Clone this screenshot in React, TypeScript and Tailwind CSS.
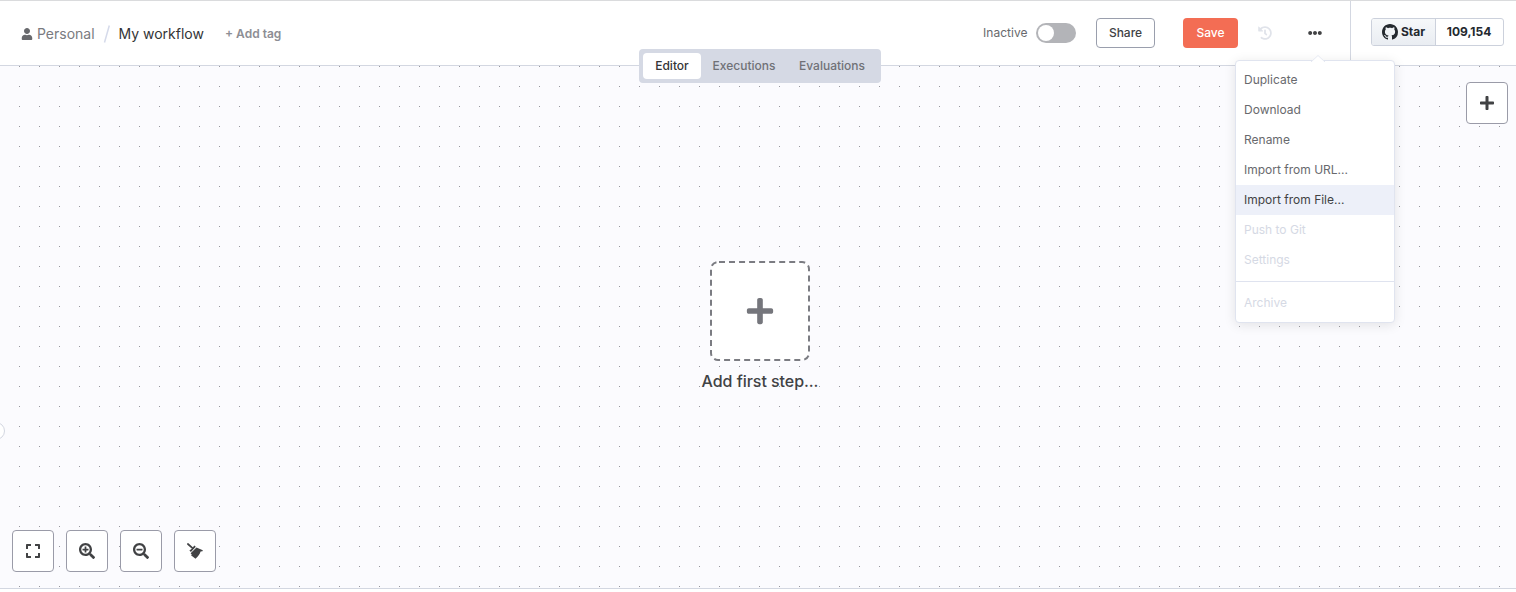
import type { ReactNode } from 'react';
import { FaUser, FaHistory, FaEllipsisH, FaPlus, FaExpand, FaSearchPlus, FaSearchMinus } from 'react-icons/fa';

const primaryActions = ['Duplicate', 'Download', 'Rename', 'Import from URL...', 'Import from File...', 'Push to Git', 'Settings'];

function actionColor(label: string) {
  if (label === 'Import from File...') return 'bg-[#edf0f9] text-[#414244]';
  if (label === 'Push to Git' || label === 'Settings') return 'text-[#d5d9e4]';
  return 'text-[#68696d]';
}

function GithubMark() {
  return (
    <svg viewBox="0 0 16 16" className="size-4 fill-[#24292f]">
      <path d="M8 0C3.58 0 0 3.58 0 8c0 3.54 2.29 6.53 5.47 7.59.4.07.55-.17.55-.38 0-.19-.01-.82-.01-1.49-2.01.37-2.53-.49-2.69-.94-.09-.23-.48-.94-.82-1.13-.28-.15-.68-.52-.01-.53.63-.01 1.08.58 1.23.82.72 1.21 1.87.87 2.33.66.07-.52.28-.87.51-1.07-1.78-.2-3.64-.89-3.64-3.95 0-.87.31-1.59.82-2.15-.08-.2-.36-1.02.08-2.12 0 0 .67-.21 2.2.82.64-.18 1.32-.27 2-.27s1.36.09 2 .27c1.53-1.04 2.2-.82 2.2-.82.44 1.1.16 1.92.08 2.12.51.56.82 1.27.82 2.15 0 3.07-1.87 3.75-3.65 3.95.29.25.54.73.54 1.48 0 1.07-.01 1.93-.01 2.2 0 .21.15.46.55.38A8.01 8.01 0 0 0 16 8c0-4.42-3.58-8-8-8z" />
    </svg>
  );
}

function BroomIcon() {
  return (
    <svg viewBox="0 0 16 16" className="size-4">
      <path d="M.9 1 5.5 5.2" stroke="#414244" strokeWidth="1.7" strokeLinecap="round" />
      <path d="M7.3 2.6 8.8 3.8 3.9 8.9 2.4 7.5 4.8 5.7z" fill="#414244" />
      <path d="m9.5 4.6 6.3 2.6-.3 1-1.9.3c-.8 2.5-2.5 5.1-5.1 7.2L4 12.3l.8-.7-1.2-1.3z" fill="#414244" />
    </svg>
  );
}

function CanvasButton({ children }: { children: ReactNode }) {
  return (
    <button className="flex size-[42px] items-center justify-center rounded-[4px] border border-[#9a9ba8] bg-white text-[#414244]">
      {children}
    </button>
  );
}

function ActionMenu() {
  return (
    <div className="absolute top-[60px] left-[1235px] z-20 w-40 rounded-[4px] border border-[#e0e4ef] bg-white pt-1 pb-1 text-[12px] shadow-[0_2px_12px_rgba(0,0,0,0.1)]">
      <svg viewBox="0 0 14 7" className="absolute -top-[6px] left-[75px] h-[7px] w-[14px]">
        <path d="M0 7 7 .5 14 7" fill="white" stroke="#e6e9f2" />
      </svg>
      {primaryActions.map((label) => (
        <div key={label} className={`flex h-[30px] items-center px-2 ${actionColor(label)}`}>{label}</div>
      ))}
      <div className="mt-[6px] border-t border-[#dfe3ef] pt-[6px]">
        <div className="flex h-[30px] items-center px-2 text-[#d5d9e4]">Archive</div>
      </div>
    </div>
  );
}

export default function App() {
  return (
    <div className="relative flex h-[592px] w-[1516px] flex-col overflow-hidden bg-white font-[Inter,sans-serif]">
      <header className="flex h-[66px] shrink-0 border-t border-b border-t-[#dadbdd] border-b-[#d3d7e1]">
        <div className="flex h-[66px] flex-1 items-center pb-px pl-[21px]">
          <FaUser className="mr-1 size-3 text-[#68696d]" />
          <span className="w-[58px] text-[14px] whitespace-nowrap text-[#7a7b80]">Personal</span>
          <svg viewBox="0 0 8 18" className="mr-[7.5px] ml-[8px] h-[18px] w-2"><path d="M1.5 17.5 6.3.5" stroke="#d5daea" strokeWidth="1.5" /></svg>
          <span className="w-[106.5px] text-[14px] whitespace-nowrap text-[#333436]">My workflow</span>
          <span className="text-[12px] font-semibold text-[#8d8e94]">+ Add tag</span>
        </div>
        <div className="flex h-16 items-center">
          <span className="mr-2 w-[45px] text-[12px] tracking-[0.05px] text-[#68696d]">Inactive</span>
          <span className="mr-5 flex h-5 w-10 items-center rounded-full bg-[#b3b4b8] px-[2px]"><span className="size-4 rounded-full bg-white" /></span>
          <button className="mr-7 h-[30px] w-[59px] rounded-[4px] border border-[#9a9fad] text-[12px] font-medium text-[#414244]">Share</button>
          <button className="h-[30px] w-[55px] rounded-[4px] bg-[#f36d54] text-[12px] font-medium text-white">Save</button>
          <FaHistory className="ml-5 size-[14px] text-[#e0e3ea]" />
          <FaEllipsisH className="mr-[28px] ml-9 size-[14px] text-[#414244]" />
        </div>
        <div className="flex w-[166px] items-start border-l border-[#d3d7e1] pt-[17px] pl-5">
          <div className="flex h-7 w-[133px] overflow-hidden rounded-[3px] border border-[#ccd1dc] text-[12px] font-bold text-[#24292f]">
            <div className="flex w-[63px] items-center gap-[3px] bg-gradient-to-b from-[#f6f8fa] to-[#e9edf2] pl-[10px]"><GithubMark />Star</div>
            <div className="flex flex-1 items-center justify-center border-l border-[#ccd1dc] pr-px">109,154</div>
          </div>
        </div>
      </header>

      <main className="relative flex h-[523px] shrink-0 flex-col justify-between border-b border-[#d3d7e1] bg-[#fbfbfe]">
        <svg className="absolute inset-0 h-full w-full">
          <defs>
            <pattern id="dots" width="20" height="20" patternUnits="userSpaceOnUse"><rect x="19" y="0" width="1" height="1" fill="#97989e" /></pattern>
          </defs>
          <rect width="100%" height="100%" fill="url(#dots)" />
        </svg>
        <div className="absolute top-[356px] -left-[13px] size-[18px] rounded-full border border-[#d3d7e1] bg-white" />
        <div className="absolute top-[195px] left-[660px] flex w-[200px] flex-col items-center">
          <div className="flex size-[100px] items-center justify-center">
            <svg viewBox="0 0 100 100" className="absolute top-0 left-[50px] size-[100px]">
              <rect x="1" y="1" width="98" height="98" rx="7" fill="white" stroke="#7b7c82" strokeWidth="2" strokeDasharray="6 4.03" strokeDashoffset="-1" />
            </svg>
            <FaPlus className="relative size-[30px] text-[#75767c]" />
          </div>
          <span className="relative mt-2 text-[16px] leading-6 font-medium tracking-[-0.05px] whitespace-nowrap text-[#414244]">Add first step...</span>
        </div>
        <div className="relative flex justify-end pt-4 pr-2"><CanvasButton><FaPlus className="size-4" /></CanvasButton></div>
        <div className="relative flex gap-3 pb-4 pl-3">
          <CanvasButton><FaExpand className="size-4" /></CanvasButton>
          <CanvasButton><FaSearchPlus className="size-4" /></CanvasButton>
          <CanvasButton><FaSearchMinus className="size-4" /></CanvasButton>
          <CanvasButton><BroomIcon /></CanvasButton>
        </div>
      </main>

      <nav className="absolute top-[49px] left-[639px] z-10 flex h-[34px] w-[242px] rounded-[4px] bg-[#d5d9e4] p-1 text-[12px] font-medium text-[#707177]">
        <span className="flex w-[58px] items-center justify-center rounded-[4px] bg-white text-[#333436]">Editor</span>
        <span className="flex w-[86px] items-center justify-center">Executions</span>
        <span className="flex w-[90px] items-center justify-center">Evaluations</span>
      </nav>
      <ActionMenu />
    </div>
  );
}
